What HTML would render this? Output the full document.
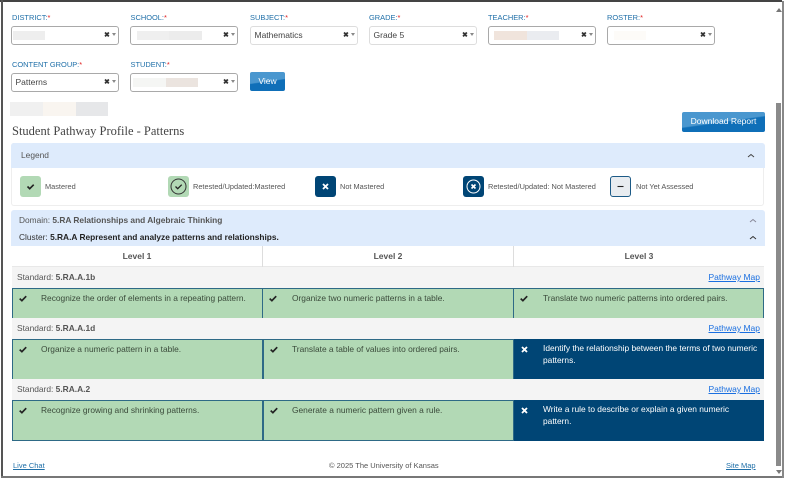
<!DOCTYPE html>
<html><head><meta charset="utf-8">
<style>
html,body{margin:0;padding:0;width:785px;height:480px;overflow:hidden;background:#fff;font-family:"Liberation Sans",sans-serif;color:#333}
.a{position:absolute;white-space:nowrap}
.lb{font-size:7.45px;line-height:10px;color:#1f6fa8;height:10px}
.lb i{color:#e02020;font-style:normal}
.s{position:absolute;width:106px;height:17px;border:1px solid #a9a9a9;border-radius:3px;background:#fff;font-size:8.5px;line-height:17px;color:#444}
.s span.t{position:absolute;left:3.5px;top:0}
.s b{position:absolute;left:92px;top:0;font-size:7px;color:#333;line-height:17px}
.s u{position:absolute;left:100px;top:6px;width:0;height:0;border:2px solid transparent;border-width:3px 2px 0;border-top-color:#888;text-decoration:none}
.bl{position:absolute;height:9px;top:4px}
.btn{position:absolute;background:linear-gradient(172deg,#4a97cf 0 48%,#0f6fb8 52% 100%);color:#fff;border-radius:2px;text-align:center;font-size:8.5px}
.lg{position:absolute;top:176px;width:21px;height:21px;border-radius:3px;box-sizing:border-box}
.lt{position:absolute;top:182px;font-size:7.38px;line-height:10px;color:#555;white-space:nowrap}
.cell{position:absolute;box-sizing:border-box;font-size:8.4px;line-height:12px}
.g{background:#b2d9b5;border:1px solid #2e6a86;color:#3a4a3a}
.n{background:#004575;color:#fff}
.cell svg{position:absolute;left:6px;top:6px}
.n svg{left:6.5px;top:7px}
.cell span.x{position:absolute}
.g span.x{left:28px;top:3px}
.n span.x{left:29px;top:3px;white-space:nowrap}
.std{position:absolute;left:12px;width:752px;background:#f4f4f4;font-size:8.4px;line-height:21px;color:#555;height:21px}
.std b{color:#555}
.std span{position:absolute;left:5px;top:0}
.std a{position:absolute;right:4px;top:0;color:#1a6fe0;text-decoration:underline;font-size:8.5px}
</style></head><body>
<!-- frame -->
<div class="a" style="left:0;top:0;width:782px;height:1.5px;background:#444"></div>
<div class="a" style="left:1px;top:0;width:1.5px;height:477px;background:#555"></div>
<div class="a" style="left:1px;top:476px;width:781px;height:2px;background:#777"></div>
<div class="a" style="left:782px;top:1px;width:1.5px;height:477px;background:#888"></div>
<!-- scrollbar -->
<div class="a" style="left:776px;top:103px;width:5px;height:363px;background:#8a8a8a"></div>
<div class="a" style="left:775.5px;top:5px;width:0;height:0;border:3px solid transparent;border-bottom:4px solid #777"></div>
<div class="a" style="left:775.5px;top:470px;width:0;height:0;border:3px solid transparent;border-top:4px solid #777"></div>

<div class="a lb" style="left:12px;top:13px">DISTRICT:<i>*</i></div>
<div class="a lb" style="left:130.5px;top:13px">SCHOOL:<i>*</i></div>
<div class="a lb" style="left:250px;top:13px">SUBJECT:<i>*</i></div>
<div class="a lb" style="left:369px;top:13px">GRADE:<i>*</i></div>
<div class="a lb" style="left:488px;top:13px">TEACHER:<i>*</i></div>
<div class="a lb" style="left:607px;top:13px">ROSTER:<i>*</i></div>
<div class="a lb" style="left:12px;top:60px">CONTENT GROUP:<i>*</i></div>
<div class="a lb" style="left:130.5px;top:60px">STUDENT:<i>*</i></div>

<div class="s" style="left:11px;top:26px"><div class="bl" style="left:1px;width:32px;background:#eeeeee"></div><b>✖</b><u></u></div>
<div class="s" style="left:130px;top:26px"><div class="bl" style="left:6px;width:32px;background:#efefef"></div><div class="bl" style="left:38px;width:33px;background:#ececec"></div><b>✖</b><u></u></div>
<div class="s" style="left:250px;top:26px;border-color:#ddd"><span class="t">Mathematics</span><b>✖</b><u></u></div>
<div class="s" style="left:369px;top:26px;border-color:#ddd"><span class="t">Grade 5</span><b>✖</b><u></u></div>
<div class="s" style="left:488px;top:26px"><div class="bl" style="left:5px;width:33px;background:#f0e4dc"></div><div class="bl" style="left:38px;width:32px;background:#eaecf0"></div><b>✖</b><u></u></div>
<div class="s" style="left:607px;top:26px"><div class="bl" style="left:6px;width:32px;background:#fdfbf8"></div><b>✖</b><u></u></div>
<div class="s" style="left:11px;top:73px"><span class="t">Patterns</span><b>✖</b><u></u></div>
<div class="s" style="left:130px;top:73px"><div class="bl" style="left:2px;width:33px;background:#f5f6f4"></div><div class="bl" style="left:35px;width:32px;background:#ebe4df"></div><b>✖</b><u></u></div>

<div class="btn" style="left:250px;top:72px;width:35px;height:19px;line-height:18px">View</div>

<div class="a" style="left:10px;top:102px;width:33px;height:14px;background:#f0f0f0"></div>
<div class="a" style="left:43px;top:102px;width:33px;height:14px;background:#f9f5f0"></div>
<div class="a" style="left:76px;top:102px;width:32px;height:14px;background:#e6e7e9"></div>

<div class="a" style="left:12px;top:124px;font:12.5px/14px 'Liberation Serif',serif;color:#444">Student Pathway Profile - Patterns</div>
<div class="btn" style="left:682px;top:112px;width:83px;height:20px;line-height:19px">Download Report</div>

<!-- legend -->
<div class="a" style="left:11px;top:143px;width:753px;height:63px;border:1px solid #eee;border-top-color:#ddd;border-radius:3px;box-sizing:border-box"></div>
<div class="a" style="left:11px;top:143px;width:754px;height:25px;background:#deebfc;border-radius:3px 3px 0 0"></div>
<div class="a" style="left:21px;top:150px;font-size:8.4px;line-height:10px;color:#555">Legend</div>
<svg class="a" style="left:747px;top:153px" width="8" height="6"><path d="M1 4 L4 1.5 L7 4" fill="none" stroke="#444" stroke-width="1"/></svg>

<div class="lg" style="left:20px;background:#b2d9b5"><svg width="21" height="21"><path d="M7.5 10.5 L9.7 12.7 L13.7 8.7" fill="none" stroke="#222" stroke-width="1.6"/></svg></div>
<div class="lt" style="left:45px">Mastered</div>
<div class="lg" style="left:168px;background:#b2d9b5"><svg width="21" height="21"><circle cx="10.5" cy="10.5" r="7.5" fill="none" stroke="#333" stroke-width="1"/><path d="M7.5 10.5 L9.7 12.7 L13.7 8.7" fill="none" stroke="#222" stroke-width="1.3"/></svg></div>
<div class="lt" style="left:193px">Retested/Updated:Mastered</div>
<div class="lg" style="left:315px;background:#004575"><svg width="21" height="21"><path d="M8 8 L13 13 M13 8 L8 13" fill="none" stroke="#fff" stroke-width="1.8"/></svg></div>
<div class="lt" style="left:340px">Not Mastered</div>
<div class="lg" style="left:463px;background:#004575"><svg width="21" height="21"><circle cx="10.5" cy="10.5" r="6.5" fill="none" stroke="#fff" stroke-width="1"/><path d="M8.5 8.5 L12.5 12.5 M12.5 8.5 L8.5 12.5" fill="none" stroke="#fff" stroke-width="1.6"/></svg></div>
<div class="lt" style="left:488px">Retested/Updated: Not Mastered</div>
<div class="lg" style="left:610px;background:#e8ecf0;border:1px solid #1c5a86"><svg width="19" height="19" style="display:block"><path d="M6.5 9.5 H12.5" stroke="#222" stroke-width="1.1"/></svg></div>
<div class="lt" style="left:636px">Not Yet Assessed</div>

<!-- domain -->
<div class="a" style="left:11px;top:210px;width:754px;height:36px;background:#deebfc;border-radius:3px 3px 0 0"></div>
<div class="a" style="left:19px;top:215px;font-size:8.35px;line-height:10px;color:#555">Domain: <b>5.RA Relationships and Algebraic Thinking</b></div>
<div class="a" style="left:19px;top:232px;font-size:8.35px;line-height:10px;color:#333">Cluster: <b style="color:#222">5.RA.A Represent and analyze patterns and relationships.</b></div>
<svg class="a" style="left:749px;top:218px" width="8" height="6"><path d="M1 4 L4 1.5 L7 4" fill="none" stroke="#889" stroke-width="1"/></svg>
<svg class="a" style="left:749px;top:235px" width="8" height="6"><path d="M1 4 L4 1.5 L7 4" fill="none" stroke="#333" stroke-width="1"/></svg>

<!-- levels -->
<div class="a" style="left:12px;top:246px;width:752px;height:21px;border-bottom:1px solid #e8e8e8;box-sizing:border-box"></div>
<div class="a" style="left:262px;top:246px;width:1px;height:21px;background:#ddd"></div>
<div class="a" style="left:513px;top:246px;width:1px;height:21px;background:#ddd"></div>
<div class="a" style="left:12px;top:251px;width:250px;text-align:center;font:bold 8.5px/10px 'Liberation Sans',sans-serif;color:#555">Level 1</div>
<div class="a" style="left:263px;top:251px;width:250px;text-align:center;font:bold 8.5px/10px 'Liberation Sans',sans-serif;color:#555">Level 2</div>
<div class="a" style="left:514px;top:251px;width:250px;text-align:center;font:bold 8.5px/10px 'Liberation Sans',sans-serif;color:#555">Level 3</div>

<div class="std" style="top:267px"><span>Standard: <b>5.RA.A.1b</b></span><a>Pathway Map</a></div>
<div class="cell g" style="left:12px;top:288px;width:251px;height:31px"><svg width="8" height="7" viewBox="0 0 8 7"><path d="M0.7 3.6 L2.9 5.7 L7.2 1.2" fill="none" stroke="#222" stroke-width="1.7"/></svg><span class="x">Recognize the order of elements in a repeating pattern.</span></div>
<div class="cell g" style="left:262px;top:288px;width:252px;height:31px"><svg width="8" height="7" viewBox="0 0 8 7"><path d="M0.7 3.6 L2.9 5.7 L7.2 1.2" fill="none" stroke="#222" stroke-width="1.7"/></svg><span class="x" style="left:29px">Organize two numeric patterns in a table.</span></div>
<div class="cell g" style="left:513px;top:288px;width:251px;height:31px"><svg width="8" height="7" viewBox="0 0 8 7"><path d="M0.7 3.6 L2.9 5.7 L7.2 1.2" fill="none" stroke="#222" stroke-width="1.7"/></svg><span class="x" style="left:29px">Translate two numeric patterns into ordered pairs.</span></div>

<div class="std" style="top:318px"><span>Standard: <b>5.RA.A.1d</b></span><a>Pathway Map</a></div>
<div class="cell g" style="left:12px;top:339px;width:251px;height:41px"><svg width="8" height="7" viewBox="0 0 8 7"><path d="M0.7 3.6 L2.9 5.7 L7.2 1.2" fill="none" stroke="#222" stroke-width="1.7"/></svg><span class="x">Organize a numeric pattern in a table.</span></div>
<div class="cell g" style="left:263px;top:339px;width:251px;height:41px"><svg width="8" height="7" viewBox="0 0 8 7"><path d="M0.7 3.6 L2.9 5.7 L7.2 1.2" fill="none" stroke="#222" stroke-width="1.7"/></svg><span class="x">Translate a table of values into ordered pairs.</span></div>
<div class="cell n" style="left:514px;top:339px;width:250px;height:40px"><svg width="7" height="7" viewBox="0 0 7 7"><path d="M1 1 L6 6 M6 1 L1 6" fill="none" stroke="#fff" stroke-width="1.8"/></svg><span class="x">Identify the relationship between the terms of two numeric<br>patterns.</span></div>

<div class="std" style="top:379px"><span>Standard: <b>5.RA.A.2</b></span><a>Pathway Map</a></div>
<div class="cell g" style="left:12px;top:400px;width:251px;height:41px"><svg width="8" height="7" viewBox="0 0 8 7"><path d="M0.7 3.6 L2.9 5.7 L7.2 1.2" fill="none" stroke="#222" stroke-width="1.7"/></svg><span class="x">Recognize growing and shrinking patterns.</span></div>
<div class="cell g" style="left:263px;top:400px;width:251px;height:41px"><svg width="8" height="7" viewBox="0 0 8 7"><path d="M0.7 3.6 L2.9 5.7 L7.2 1.2" fill="none" stroke="#222" stroke-width="1.7"/></svg><span class="x">Generate a numeric pattern given a rule.</span></div>
<div class="cell n" style="left:514px;top:400px;width:250px;height:41px"><svg width="7" height="7" viewBox="0 0 7 7"><path d="M1 1 L6 6 M6 1 L1 6" fill="none" stroke="#fff" stroke-width="1.8"/></svg><span class="x">Write a rule to describe or explain a given numeric<br>pattern.</span></div>

<!-- footer -->
<div class="a" style="left:13px;top:461px;font-size:7.5px;line-height:10px;color:#1f6fa8;text-decoration:underline">Live Chat</div>
<div class="a" style="left:329px;top:461px;font-size:7.5px;line-height:10px;color:#555">© 2025 The University of Kansas</div>
<div class="a" style="left:726px;top:461px;font-size:7.5px;line-height:10px;color:#1f6fa8;text-decoration:underline">Site Map</div>
</body></html>
